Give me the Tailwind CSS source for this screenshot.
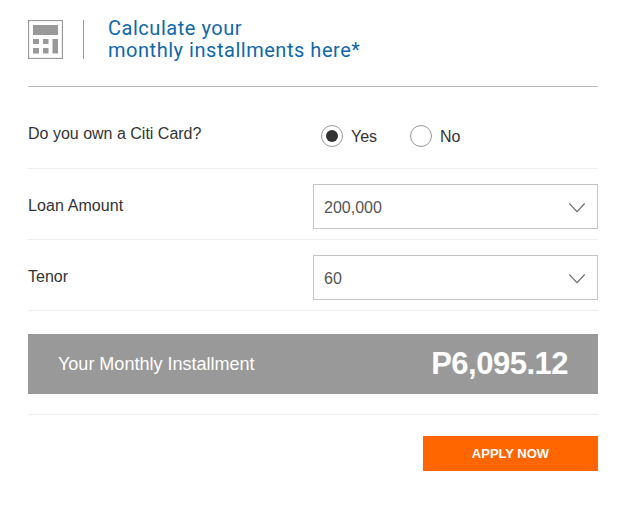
<!DOCTYPE html>
<html lang="en">

<head>
    <meta charset="UTF-8">
    <meta name="viewport" content="width=device-width, initial-scale=1.0">
    <title>Monthly Installment Calculator</title>
    <script src="https://cdn.jsdelivr.net/npm/@tailwindcss/browser@4"></script>
</head>

<body class="bg-white text-[#333] font-['Liberation_Sans',Arial,sans-serif]">

    <form class="ml-7 w-[570px]">
        <!-- Header -->
        <div class="flex h-[87px] border-b border-[#bbb] pt-5">
            <svg class="h-[39px] w-[35px]" viewBox="0 0 35 39" fill="#999">
                <rect x="0.5" y="0.5" width="34" height="38" fill="none" stroke="#999" stroke-width="1.3" />
                <rect x="5" y="5" width="25" height="10" />
                <rect x="5" y="19" width="6" height="5" />
                <rect x="15" y="19" width="5.5" height="5" />
                <rect x="5" y="28" width="6" height="5.5" />
                <rect x="15" y="28" width="5.5" height="5.5" />
                <rect x="24.5" y="19" width="5.5" height="14.5" />
            </svg>
            <div class="ml-5 h-[39px] w-px bg-[#999]"></div>
            <h1 class="-mt-[3px] ml-6 font-[Roboto,sans-serif] text-[20px] leading-[22px] tracking-[0.53px] text-[#0f68a9]">
                Calculate your<br>monthly installments here*
            </h1>
        </div>

        <!-- Card ownership -->
        <div class="flex h-[82px] border-b border-[#eee] pt-[38px] text-base leading-[18px]">
            <div class="w-[293px]">Do you own a Citi Card?</div>
            <label class="flex h-[22px] w-[89px] items-center">
                <svg class="mr-2 size-[22px]" viewBox="0 0 22 22">
                    <circle cx="11" cy="11" r="10.5" fill="none" stroke="#999" />
                    <circle cx="11" cy="11" r="6" fill="#333" />
                </svg>
                <span class="pt-0.5">Yes</span>
            </label>
            <label class="flex h-[22px] items-center">
                <svg class="mr-2 size-[22px]" viewBox="0 0 22 22">
                    <circle cx="11" cy="11" r="10.5" fill="none" stroke="#999" />
                </svg>
                <span class="pt-0.5">No</span>
            </label>
        </div>

        <!-- Loan amount -->
        <div class="flex h-[71px] justify-between border-b border-[#eee] pt-[15px] text-base leading-[18px]">
            <div class="pt-[13px] tracking-[0.1px]">Loan Amount</div>
            <div class="flex h-[45px] w-[285px] items-center justify-between border border-[#c4c4c4] pr-3 pl-[10px] text-[#555]">
                <span class="pt-0.5">200,000</span>
                <svg class="mt-0.5 h-[10px] w-[16px]" viewBox="0 0 16 10" fill="none" stroke="#666" stroke-width="1.1">
                    <path d="M0.3 0.5L8 8.7L15.7 0.5" />
                </svg>
            </div>
        </div>

        <!-- Tenor -->
        <div class="flex h-[71px] justify-between border-b border-[#eee] pt-[15px] text-base leading-[18px]">
            <div class="pt-[13px]">Tenor</div>
            <div class="flex h-[45px] w-[285px] items-center justify-between border border-[#c4c4c4] pr-3 pl-[10px] text-[#555]">
                <span class="pt-0.5">60</span>
                <svg class="mt-0.5 h-[10px] w-[16px]" viewBox="0 0 16 10" fill="none" stroke="#666" stroke-width="1.1">
                    <path d="M0.3 0.5L8 8.7L15.7 0.5" />
                </svg>
            </div>
        </div>

        <!-- Result -->
        <div class="border-b border-[#eee] pt-[23px] pb-5">
            <div class="flex h-[60px] items-center justify-between bg-[#999] px-[30px] text-white">
                <span class="text-lg">Your Monthly Installment</span>
                <span class="text-[31px] font-bold tracking-[-0.5px]">P6,095.12</span>
            </div>
        </div>

        <button type="button" class="mt-[21px] ml-auto block h-[35px] w-[175px] bg-[#ff6600] text-[13px] font-bold text-white">APPLY NOW</button>
    </form>

</body>

</html>
